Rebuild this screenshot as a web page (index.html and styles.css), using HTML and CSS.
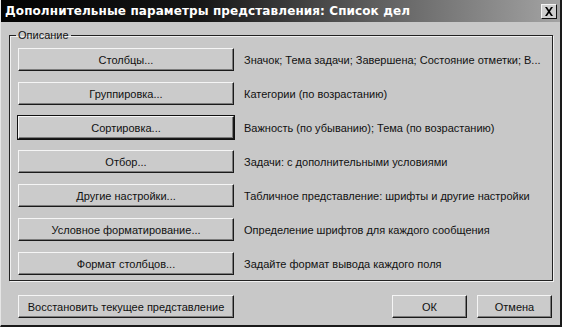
FILE: index.html
```html
<!DOCTYPE html>
<html lang="ru">
  <head>
    <meta charset="UTF-8">
    <title>Дополнительные параметры представления</title>
    <link rel="stylesheet" href="styles.css">
  </head>
  <body>
    <div class="window">
      <div class="titlebar">
        <span class="titlebar__text">Дополнительные параметры представления: Список дел</span>
        <span class="titlebar__close">
          <svg width="10" height="9" viewBox="0 0 10 9"><path d="M1 0h2l2 3 2-3h2L6 4.5 9 9H7L5 6 3 9H1l3-4.5z" fill="#000"/></svg>
        </span>
      </div>
      <div class="content">
        <fieldset class="group">
          <legend class="group__title">Описание</legend>
          <div class="row">
            <button class="btn btn--wide">Столбцы...</button>
            <span class="row__text">Значок; Тема задачи; Завершена; Состояние отметки; В...</span>
          </div>
          <div class="row">
            <button class="btn btn--wide">Группировка...</button>
            <span class="row__text">Категории (по возрастанию)</span>
          </div>
          <div class="row">
            <button class="btn btn--wide btn--default">Сортировка...</button>
            <span class="row__text">Важность (по убыванию); Тема (по возрастанию)</span>
          </div>
          <div class="row">
            <button class="btn btn--wide">Отбор...</button>
            <span class="row__text">Задачи: с дополнительными условиями</span>
          </div>
          <div class="row">
            <button class="btn btn--wide">Другие настройки...</button>
            <span class="row__text">Табличное представление: шрифты и другие настройки</span>
          </div>
          <div class="row">
            <button class="btn btn--wide">Условное форматирование...</button>
            <span class="row__text">Определение шрифтов для каждого сообщения</span>
          </div>
          <div class="row">
            <button class="btn btn--wide">Формат столбцов...</button>
            <span class="row__text">Задайте формат вывода каждого поля</span>
          </div>
        </fieldset>
        <div class="footer">
          <button class="btn btn--wide">Восстановить текущее представление</button>
          <div class="footer__right">
            <button class="btn btn--small">ОК</button>
            <button class="btn btn--small">Отмена</button>
          </div>
        </div>
      </div>
    </div>
  </body>
</html>
```
FILE: styles.css
```css
html, body {
  margin: 0;
  background: #c9c9c9;
}
.window {
  width: 562px;
  height: 327px;
  box-sizing: border-box;
  background: #c8c8c8;
  border-right: 2px solid #1a1a1a;
  border-bottom: 2px solid #1a1a1a;
  border-left: 1px solid #e6e6e6;
  font-family: "Liberation Sans", sans-serif;
  font-size: 11px;
  color: #111;
  display: flex;
  flex-direction: column;
}
.titlebar {
  height: 22px;
  flex: none;
  display: flex;
  align-items: center;
  justify-content: space-between;
  padding: 0 3px 0 4px;
  background: linear-gradient(90deg, #030303 0%, #151515 35%, #5a5a5a 65%, #a3a3a3 100%);
}
.titlebar__text {
  color: #fff;
  font-family: "DejaVu Sans", sans-serif;
  font-weight: bold;
  font-size: 12px;
  letter-spacing: 0.1px;
}
.titlebar__close {
  width: 14px;
  height: 13px;
  display: flex;
  align-items: center;
  justify-content: center;
  background: #cfcfcf;
  border: 1px solid;
  border-color: #f4f4f4 #111 #111 #f4f4f4;
}
.content {
  flex: 1;
  padding: 7px 7px 0 8px;
  display: flex;
  flex-direction: column;
}
.group {
  margin: 0;
  padding: 7px 8px 5px 8px;
  border: 1px solid #222;
  box-shadow: inset 1px 1px 0 #f0f0f0, 1px 1px 0 #f0f0f0;
  display: flex;
  flex-direction: column;
  gap: 11px;
}
.group__title {
  padding: 0 2px;
  margin-left: -2px;
  font-size: 11px;
}
.row {
  display: flex;
  align-items: center;
  gap: 10px;
}
.row__text {
  white-space: nowrap;
}
.btn {
  height: 23px;
  box-sizing: border-box;
  background: #cbcbcb;
  border: 1px solid;
  border-color: #f5f5f5 #1a1a1a #1a1a1a #f5f5f5;
  box-shadow: inset -1px -1px 0 #7c7c7c;
  font-family: "Liberation Sans", sans-serif;
  font-size: 11px;
  color: #111;
  padding: 0;
  white-space: nowrap;
}
.btn--wide {
  width: 216px;
  flex: none;
}
.btn--default {
  outline: 1px solid #111;
  outline-offset: 0;
}
.btn--small {
  width: 75px;
}
.footer {
  display: flex;
  justify-content: space-between;
  align-items: center;
  margin-top: 14px;
  padding-left: 9px;
}
.footer__right {
  display: flex;
  gap: 10px;
  padding-right: 1px;
}
```
